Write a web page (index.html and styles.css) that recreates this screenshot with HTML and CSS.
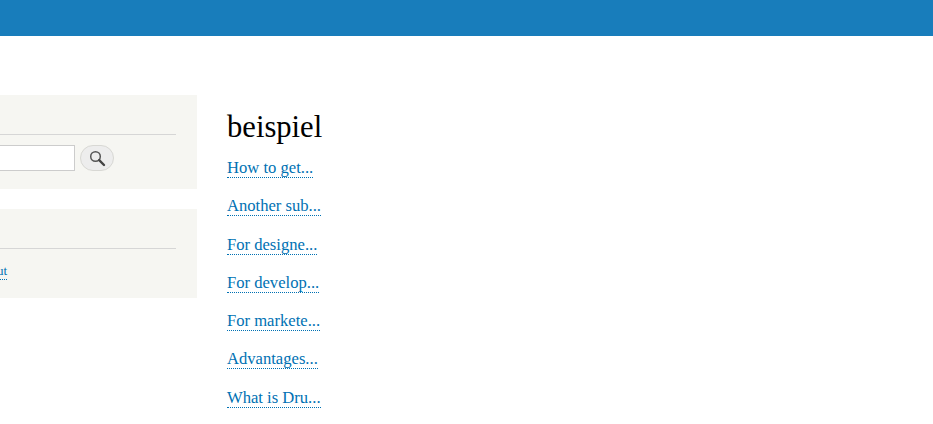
FILE: index.html
```html
<!DOCTYPE html>
<html lang="en">
<head>
  <meta charset="UTF-8" />
  <meta name="viewport" content="width=device-width, initial-scale=1" />
  <title>beispiel</title>
  <link rel="stylesheet" href="styles.css">
</head>
<body>
  <header class="topbar"></header>
  <div class="page">
    <aside class="sidebar">
      <section class="block block-search">
        <div class="block-title"></div>
        <form class="search-form">
          <input class="search-input" type="text" aria-label="Search" />
          <button class="search-button" type="button" aria-label="Search">
            <svg width="17" height="17" viewBox="0 0 17 17" aria-hidden="true">
              <circle cx="6.5" cy="6.5" r="4.8" fill="none" stroke="#555" stroke-width="1.5" />
              <path d="M10.2 10.2 L15 15" stroke="#444" stroke-width="2.4" stroke-linecap="round" />
            </svg>
          </button>
        </form>
      </section>
      <section class="block block-menu">
        <div class="block-title"></div>
        <div class="block-links"><a href="#">Log out</a></div>
      </section>
    </aside>
    <main class="content">
      <h1 class="title">beispiel</h1>
      <ul class="article-list">
        <li><a href="#">How to get...</a></li>
        <li><a href="#">Another sub...</a></li>
        <li><a href="#">For designe...</a></li>
        <li><a href="#">For develop...</a></li>
        <li><a href="#">For markete...</a></li>
        <li><a href="#">Advantages...</a></li>
        <li><a href="#">What is Dru...</a></li>
      </ul>
    </main>
  </div>
</body>
</html>
```
FILE: styles.css
```css
:root {
  --bar-color: #187dbb;
  --block-color: #f6f6f2;
  --link-color: #0071b3;
  --font-family: "Liberation Serif", "Times New Roman", serif;
}

body {
  margin: 0;
  background: #fff;
  color: #000;
  font-family: var(--font-family);
  overflow: hidden;
}

.topbar {
  height: 36px;
  background: var(--bar-color);
}

.page {
  display: flex;
  gap: 30px;
  padding-top: 59px;
}

.sidebar {
  width: 197px;
  flex-shrink: 0;
  display: flex;
  flex-direction: column;
  gap: 20px;
}

.block {
  background: var(--block-color);
  padding-right: 21px;
  overflow: hidden;
}

.block-search {
  height: 94px;
}

.block-menu {
  height: 89px;
}

.block-title {
  height: 39px;
  border-bottom: 1px solid #d6d6d6;
}

.search-form {
  display: flex;
  justify-content: flex-end;
  align-items: center;
  gap: 5px;
  margin-top: 10px;
  margin-right: 62px;
  margin-left: -40px;
}

.search-input {
  flex: 1;
  min-width: 0;
  height: 26px;
  box-sizing: border-box;
  border: 1px solid #ccc;
  background: #fff;
  padding: 0;
}

.search-button {
  width: 34px;
  height: 26px;
  padding: 0;
  border: 1px solid #d8d8d4;
  border-radius: 13px;
  background: #ededed;
  display: flex;
  align-items: center;
  justify-content: center;
}

.block-links {
  display: flex;
  justify-content: flex-end;
  white-space: nowrap;
  margin-top: 14px;
  margin-right: 169px;
  font-size: 13px;
}

.block-links a,
.article-list a {
  color: var(--link-color);
  text-decoration: none;
  border-bottom: 1px dotted var(--link-color);
}

.content {
  padding-top: 16px;
}

.title {
  margin: 0 0 14px;
  font-size: 30.6px;
  font-weight: normal;
  line-height: 33px;
}

.article-list {
  margin: 0;
  padding: 0;
  list-style: none;
  font-size: 16.6px;
  line-height: 20px;
}

.article-list li {
  margin-bottom: 18.3px;
}
```
